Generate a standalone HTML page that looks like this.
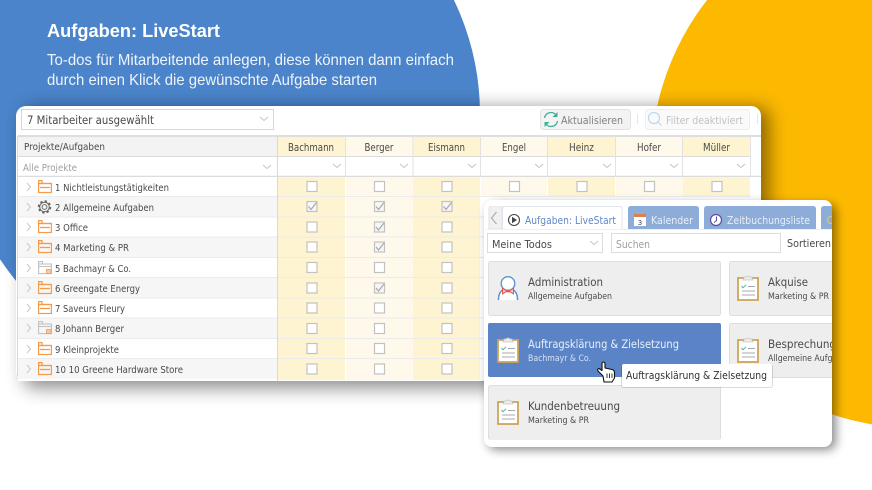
<!DOCTYPE html>
<html lang="de"><head><meta charset="utf-8"><title>Aufgaben: LiveStart</title>
<style>
html,body{margin:0;padding:0;background:#fff;width:872px;height:490px;overflow:hidden}
svg{display:block}
text{font-family:"DejaVu Sans","Liberation Sans",sans-serif;fill:#4a4a4a}
text.h{font-family:"Liberation Sans",sans-serif}
</style></head><body>
<svg width="872" height="490" viewBox="0 0 872 490" xmlns="http://www.w3.org/2000/svg">
<defs>
<filter id="sh1" x="-10%" y="-20%" width="120%" height="140%"><feGaussianBlur stdDeviation="9"/></filter>
<filter id="sh2" x="-15%" y="-15%" width="130%" height="130%"><feGaussianBlur stdDeviation="5"/></filter>
<filter id="soft" x="0" y="0" width="100%" height="100%"><feGaussianBlur stdDeviation="0.35"/></filter>
<clipPath id="c2"><rect x="484" y="200" width="348" height="247" rx="8"/></clipPath>
<g id="box"><rect x="-5" y="-5" width="10" height="10" fill="#fff" stroke="#c2c2c2" stroke-width="1.2"/></g>
<g id="chk"><rect x="-5" y="-5" width="10" height="10" fill="#f6f6f6" stroke="#c2c2c2" stroke-width="1.2"/><path d="M-3.500 0 L-1 3 L4.500 -4" fill="none" stroke="#aaa" stroke-width="1.200"/></g>
<path id="chev" d="M0 0 L3.500 4 L0 8" fill="none" stroke="#c8c8c8" stroke-width="1"/>
<path id="dn" d="M0 0 L4 3.500 L8 0" fill="none" stroke="#c4c4c4" stroke-width="1"/>
<g id="folder" fill="none" stroke="#f59a4c" stroke-width="1.200"><path d="M.6 3.500 V.6 H4 V3.500"/><rect x=".6" y="3.500" width="12.800" height="9"/><path d="M.6 3.500 H13.400 M2 7.500 H12"/></g>
<g id="folderg" fill="none" stroke="#c2c2c2" stroke-width="1.100"><path d="M.6 3 V.6 H4.500 V3"/><rect x=".6" y="3" width="12.800" height="9.600"/><path d="M.6 5.500 H13.400"/><rect x="8.500" y="8.500" width="4.500" height="4" fill="#f8c9a4" stroke="#f59a4c" stroke-width=".8"/></g>
<g id="clip"><rect x="1" y="3" width="20" height="22" fill="#fff" stroke="#cda557" stroke-width="1.800"/><path d="M7 3 V2 H9 Q11 0 13 2 H15 V3 L16 5 H6Z" fill="#ececec" stroke="#c6c6c6" stroke-width=".8"/><path d="M4.500 11 L6 12.800 L9 9.800" fill="none" stroke="#4db39b" stroke-width="1"/><path d="M11 11.500 H18 M5 16 H18 M5 20 H18" stroke="#a8a8a8" stroke-width="1"/></g>
</defs>

<rect width="872" height="490" fill="#fff"/>
<circle cx="218" cy="114" r="262" fill="#4b84ca"/>
<circle cx="916" cy="163" r="265" fill="#fcb900"/>

<g filter="url(#soft)">
<text class="h" x="47" y="37" font-size="18.500" font-weight="700" style="fill:#fff" textLength="173" lengthAdjust="spacingAndGlyphs">Aufgaben: LiveStart</text>
<text class="h" x="47" y="65" font-size="16" style="fill:#eef4fb" textLength="407" lengthAdjust="spacingAndGlyphs">To-dos für Mitarbeitende anlegen, diese können dann einfach</text>
<text class="h" x="47" y="85" font-size="16" style="fill:#eef4fb" textLength="330" lengthAdjust="spacingAndGlyphs">durch einen Klick die gewünschte Aufgabe starten</text>
</g>

<!-- main card -->
<rect x="24" y="108" width="745" height="280" rx="10" fill="#000" opacity=".45" filter="url(#sh1)"/>
<g filter="url(#soft)">
<rect x="16" y="106" width="745" height="275" rx="10" fill="#fff"/>
<rect x="21.500" y="109.500" width="252" height="20" fill="#fff" stroke="#d6d6d6"/>
<text x="27" y="124" font-size="11.300" textLength="127" lengthAdjust="spacingAndGlyphs">7 Mitarbeiter ausgewählt</text>
<use href="#dn" x="260" y="117"/>
<rect x="540.500" y="109.500" width="90" height="20" rx="3" fill="#f3f3f3" stroke="#e2e2e2"/>
<g fill="none" stroke="#3fae98" stroke-width="1.300"><path d="M544.500 118 A6.500 6.500 0 0 1 556 115"/><path d="M557.500 121 A6.500 6.500 0 0 1 546 124"/></g>
<path d="M557.500 112 V117 H552.500Z M544.500 127 V122 H549.500Z" fill="#3fae98"/>
<text x="561" y="124" font-size="10.800" style="fill:#808080" textLength="62" lengthAdjust="spacingAndGlyphs">Aktualisieren</text>
<path d="M637.500 114 V124 M757.500 114 V124" stroke="#e6e6e6"/>
<rect x="645.500" y="109.500" width="104" height="20" rx="3" fill="#fafafa" stroke="#eeeeee"/>
<circle cx="654" cy="118" r="5.500" fill="none" stroke="#bcd9ef" stroke-width="1.200"/><path d="M658 122 L661.500 125.500" stroke="#bcd9ef" stroke-width="1.200"/>
<text x="666" y="124" font-size="10.800" style="fill:#c2c2c2" textLength="77" lengthAdjust="spacingAndGlyphs">Filter deaktiviert</text>

<!-- table backgrounds -->
<rect x="18" y="135" width="743" height="2" fill="#dedede"/>
<rect x="18" y="137" width="259" height="20" fill="#f3f3f3"/>
<rect x="18" y="176" width="259" height="205" fill="#fff"/>
<g fill="#f6f6f6"><rect x="18" y="197" width="259" height="20"/><rect x="18" y="237" width="259" height="20"/><rect x="18" y="278" width="259" height="20"/><rect x="18" y="318" width="259" height="20"/><rect x="18" y="359" width="259" height="20"/></g>
<g fill="#fef4d1"><rect x="278" y="137" width="67" height="243"/><rect x="413" y="137" width="67" height="243"/><rect x="548" y="137" width="67" height="60"/><rect x="683" y="137" width="67" height="60"/></g>
<g fill="#fef9ea"><rect x="346" y="137" width="67" height="243"/><rect x="481" y="137" width="66" height="60"/><rect x="616" y="137" width="67" height="60"/></g>
<rect x="18" y="157" width="733" height="19" fill="#fff"/>
<path d="M18 156.500 H751 M18 176 H761 M18 196.500 H751 M18 217 H751 M18 237 H751 M18 257.500 H751 M18 277.500 H751 M18 298 H751 M18 318 H751 M18 338.500 H751 M18 358.500 H751" stroke="#ececec" fill="none"/>
<path d="M18 156.500 H751 M18 176.500 H761" stroke="#dcdcdc"/>
<path d="M277.500 136 V381 M17.500 136 V376" stroke="#d9d9d9"/>
<path d="M345.500 136 V176 M413 136 V176 M480.500 136 V176 M547.500 136 V176 M615.500 136 V176 M682.500 136 V176 M750.500 136 V176" stroke="#e2e2e2"/>

<text x="24" y="150" font-size="9.800" textLength="81" lengthAdjust="spacingAndGlyphs">Projekte/Aufgaben</text>
<text x="23" y="171" font-size="9.800" style="fill:#a0a0a0" textLength="54" lengthAdjust="spacingAndGlyphs">Alle Projekte</text>
<use href="#dn" x="263" y="165"/>
<g font-size="10.200">
<text x="288" y="151" textLength="46" lengthAdjust="spacingAndGlyphs">Bachmann</text><text x="364.500" y="151" textLength="29" lengthAdjust="spacingAndGlyphs">Berger</text><text x="428" y="151" textLength="37" lengthAdjust="spacingAndGlyphs">Eismann</text><text x="502" y="151" textLength="24" lengthAdjust="spacingAndGlyphs">Engel</text><text x="569" y="151" textLength="25" lengthAdjust="spacingAndGlyphs">Heinz</text><text x="637" y="151" textLength="24" lengthAdjust="spacingAndGlyphs">Hofer</text><text x="703" y="151" textLength="27" lengthAdjust="spacingAndGlyphs">Müller</text>
</g>
<use href="#dn" x="333" y="164"/><use href="#dn" x="400" y="164"/><use href="#dn" x="468" y="164"/><use href="#dn" x="535" y="164"/><use href="#dn" x="603" y="164"/><use href="#dn" x="670" y="164"/><use href="#dn" x="737" y="164"/>

<g font-size="9.800">
<text x="55" y="191" textLength="114" lengthAdjust="spacingAndGlyphs">1 Nichtleistungstätigkeiten</text>
<text x="55" y="211" textLength="99" lengthAdjust="spacingAndGlyphs">2 Allgemeine Aufgaben</text>
<text x="55" y="231" textLength="33" lengthAdjust="spacingAndGlyphs">3 Office</text>
<text x="55" y="251" textLength="74" lengthAdjust="spacingAndGlyphs">4 Marketing &amp; PR</text>
<text x="55" y="272" textLength="76" lengthAdjust="spacingAndGlyphs">5 Bachmayr &amp; Co.</text>
<text x="55" y="292" textLength="85" lengthAdjust="spacingAndGlyphs">6 Greengate Energy</text>
<text x="55" y="312" textLength="70" lengthAdjust="spacingAndGlyphs">7 Saveurs Fleury</text>
<text x="55" y="332" textLength="69" lengthAdjust="spacingAndGlyphs">8 Johann Berger</text>
<text x="55" y="353" textLength="64" lengthAdjust="spacingAndGlyphs">9 Kleinprojekte</text>
<text x="55" y="373" textLength="128" lengthAdjust="spacingAndGlyphs">10 10 Greene Hardware Store</text>
</g>
<use href="#chev" x="27" y="183"/><use href="#chev" x="27" y="203"/><use href="#chev" x="27" y="223"/><use href="#chev" x="27" y="243"/><use href="#chev" x="27" y="264"/><use href="#chev" x="27" y="284"/><use href="#chev" x="27" y="304"/><use href="#chev" x="27" y="324"/><use href="#chev" x="27" y="345"/><use href="#chev" x="27" y="365"/>
<use href="#folder" x="38" y="180"/><use href="#folder" x="38" y="220"/><use href="#folder" x="38" y="240"/><use href="#folderg" x="38" y="261"/><use href="#folder" x="38" y="281"/><use href="#folder" x="38" y="301"/><use href="#folderg" x="38" y="321"/><use href="#folder" x="38" y="342"/><use href="#folder" x="38" y="362"/>
<g fill="none" stroke="#666"><circle cx="44.500" cy="207" r="2.400" stroke-width="1"/><circle cx="44.500" cy="207" r="4.800" stroke-width="1"/><circle cx="44.500" cy="207" r="5.800" stroke-width="1.800" stroke-dasharray="2.300 2.250"/></g>

<!-- checkboxes -->
<use href="#box" x="312" y="186.500"/><use href="#box" x="379.500" y="186.500"/><use href="#box" x="447" y="186.500"/><use href="#box" x="514.500" y="186.500"/><use href="#box" x="582" y="186.500"/><use href="#box" x="649.500" y="186.500"/><use href="#box" x="717" y="186.500"/>
<use href="#chk" x="312" y="206.500"/><use href="#chk" x="379.500" y="206.500"/><use href="#chk" x="447" y="206.500"/>
<use href="#box" x="312" y="227"/><use href="#chk" x="379.500" y="227"/><use href="#box" x="447" y="227"/>
<use href="#box" x="312" y="247"/><use href="#chk" x="379.500" y="247"/><use href="#box" x="447" y="247"/>
<use href="#box" x="312" y="267.500"/><use href="#box" x="379.500" y="267.500"/><use href="#box" x="447" y="267.500"/>
<use href="#box" x="312" y="288"/><use href="#chk" x="379.500" y="288"/><use href="#box" x="447" y="288"/>
<use href="#box" x="312" y="308"/><use href="#box" x="379.500" y="308"/><use href="#box" x="447" y="308"/>
<use href="#box" x="312" y="328.500"/><use href="#box" x="379.500" y="328.500"/><use href="#box" x="447" y="328.500"/>
<use href="#box" x="312" y="348.500"/><use href="#box" x="379.500" y="348.500"/><use href="#box" x="447" y="348.500"/>
<use href="#box" x="312" y="369"/><use href="#box" x="379.500" y="369"/><use href="#box" x="447" y="369"/>
</g>

<!-- front card -->
<rect x="488" y="204" width="348" height="246" rx="8" fill="#000" opacity=".45" filter="url(#sh2)"/>
<rect x="484" y="200" width="348" height="247" rx="8" fill="#fff"/>
<g clip-path="url(#c2)"><g filter="url(#soft)">
<path d="M489 229 V209 Q489 206 492 206 H502 V229Z" fill="#f1f1f1" stroke="#e2e2e2"/>
<path d="M496.500 212 L491.500 218 L496.500 224" fill="none" stroke="#aaa" stroke-width="1.100"/>
<path d="M502.500 229.500 V209 Q502.500 206.500 505 206.500 H619 Q622 206.500 622 209 V229.500" fill="#fff" stroke="#dfe4ec"/>
<circle cx="514" cy="220" r="5.500" fill="#fff" stroke="#444" stroke-width="1.100"/><path d="M512 216.800 L517 220 L512 223.200Z" fill="#444"/>
<text x="525" y="224" font-size="10.300" style="fill:#5f88c8" textLength="91" lengthAdjust="spacingAndGlyphs">Aufgaben: LiveStart</text>
<path d="M628 230 V209 Q628 206 631 206 H696 Q699 206 699 209 V230Z" fill="#8dacd8"/>
<rect x="634" y="214" width="12" height="12" fill="#fff"/><rect x="634" y="214" width="12" height="3" fill="#d9824f"/>
<text x="640" y="225" font-size="7" text-anchor="middle">3</text>
<text x="651" y="224" font-size="10.300" style="fill:#e8eff9" textLength="42" lengthAdjust="spacingAndGlyphs">Kalender</text>
<path d="M704 230 V209 Q704 206 707 206 H813 Q816 206 816 209 V230Z" fill="#8dacd8"/>
<circle cx="716" cy="220" r="5.500" fill="#fff" stroke="#5b4da0" stroke-width="1.200"/><path d="M716.500 216.500 V220.500 L714 222.500" fill="none" stroke="#5b4da0"/>
<text x="727" y="224" font-size="10.300" style="fill:#e8eff9" textLength="83" lengthAdjust="spacingAndGlyphs">Zeitbuchungsliste</text>
<path d="M821 230 V209 Q821 206 824 206 H840 V230Z" fill="#8dacd8"/>
<circle cx="831" cy="220" r="3.500" fill="none" stroke="#f4c74a"/>
<rect x="486" y="229" width="346" height="1" fill="#f0f0f0"/>

<rect x="487.500" y="233.500" width="115" height="19" fill="#fff" stroke="#dcdcdc"/>
<text x="492" y="248" font-size="10.300" textLength="60" lengthAdjust="spacingAndGlyphs">Meine Todos</text>
<use href="#dn" x="590" y="241"/>
<rect x="611.500" y="233.500" width="169" height="19" fill="#fff" stroke="#dcdcdc"/>
<text x="616" y="248" font-size="10.300" style="fill:#a0a0a0" textLength="34" lengthAdjust="spacingAndGlyphs">Suchen</text>
<text x="787" y="247" font-size="10.300" textLength="44" lengthAdjust="spacingAndGlyphs">Sortieren</text>

<g fill="#eeeeee" stroke="#dedede">
<rect x="488.500" y="261.500" width="232" height="54" rx="2"/>
<rect x="729.500" y="261.500" width="140" height="54" rx="2"/>
<rect x="729.500" y="323.500" width="140" height="54" rx="2"/>
<rect x="488.500" y="385.500" width="232" height="54" rx="2"/>
</g>
<rect x="488" y="323" width="233" height="54" rx="2" fill="#5a84c6"/>

<circle cx="508" cy="283.500" r="6.800" fill="#fff" stroke="#5d94d4" stroke-width="1.400"/>
<path d="M498.500 300 Q498.500 292 503 290 M517.500 300 Q517.500 292 513 290" fill="none" stroke="#5d94d4" stroke-width="1.400"/>
<path d="M498.500 300 H517.500 V297 Q516 292 513 290 H503 Q500 292 498.500 297Z" fill="#fff"/>
<path d="M498.500 300 Q498.500 292 503 290 M517.500 300 Q517.500 292 513 290" fill="none" stroke="#5d94d4" stroke-width="1.400"/>
<path d="M502.500 288.500 L507 291 L502.500 294Z M513.500 288.500 L509 291 L513.500 294Z" fill="#f7c9c0" stroke="#e2574c"/>
<rect x="506.500" y="289.800" width="3" height="2.500" fill="#e2574c"/>

<use href="#clip" x="737" y="275"/><use href="#clip" x="497" y="337"/><use href="#clip" x="737" y="337"/><use href="#clip" x="497" y="399"/>

<text x="528" y="286" font-size="11.500" textLength="75" lengthAdjust="spacingAndGlyphs">Administration</text>
<text x="528" y="299" font-size="8.800" textLength="84" lengthAdjust="spacingAndGlyphs">Allgemeine Aufgaben</text>
<text x="768" y="286" font-size="11.500" textLength="40" lengthAdjust="spacingAndGlyphs">Akquise</text>
<text x="768" y="299" font-size="8.800" textLength="61" lengthAdjust="spacingAndGlyphs">Marketing &amp; PR</text>
<text x="528" y="348" font-size="11.500" style="fill:#eaf0fa" textLength="151" lengthAdjust="spacingAndGlyphs">Auftragsklärung &amp; Zielsetzung</text>
<text x="528" y="361" font-size="8.800" style="fill:#d6e2f4" textLength="63" lengthAdjust="spacingAndGlyphs">Bachmayr &amp; Co.</text>
<text x="768" y="348" font-size="11.500" textLength="68" lengthAdjust="spacingAndGlyphs">Besprechung</text>
<text x="768" y="361" font-size="8.800" textLength="84" lengthAdjust="spacingAndGlyphs">Allgemeine Aufgaben</text>
<text x="528" y="410" font-size="11.500" textLength="92" lengthAdjust="spacingAndGlyphs">Kundenbetreuung</text>
<text x="528" y="423" font-size="8.800" textLength="61" lengthAdjust="spacingAndGlyphs">Marketing &amp; PR</text>

<rect x="621" y="364" width="152" height="24" rx="3" fill="#000" opacity=".14"/>
<rect x="622" y="364" width="150" height="23" rx="2" fill="#fff"/>
<text x="626" y="379" font-size="10.300" style="fill:#333" textLength="141" lengthAdjust="spacingAndGlyphs">Auftragsklärung &amp; Zielsetzung</text>

<path d="M603 376 L598 371 Q597 369 599 368.500 L602 370.500 V363 Q603 361 605 363 V368 L612 369.500 Q614.500 370 614.500 373 V378 L612 382 H604 Z" fill="#fff" stroke="#111" stroke-width="1.100" stroke-linejoin="round"/>
<path d="M607 373.500 V378 M609.500 373.500 V378 M612 373.500 V378" stroke="#222" stroke-width=".9"/>
</g></g>
</svg>
</body></html>
